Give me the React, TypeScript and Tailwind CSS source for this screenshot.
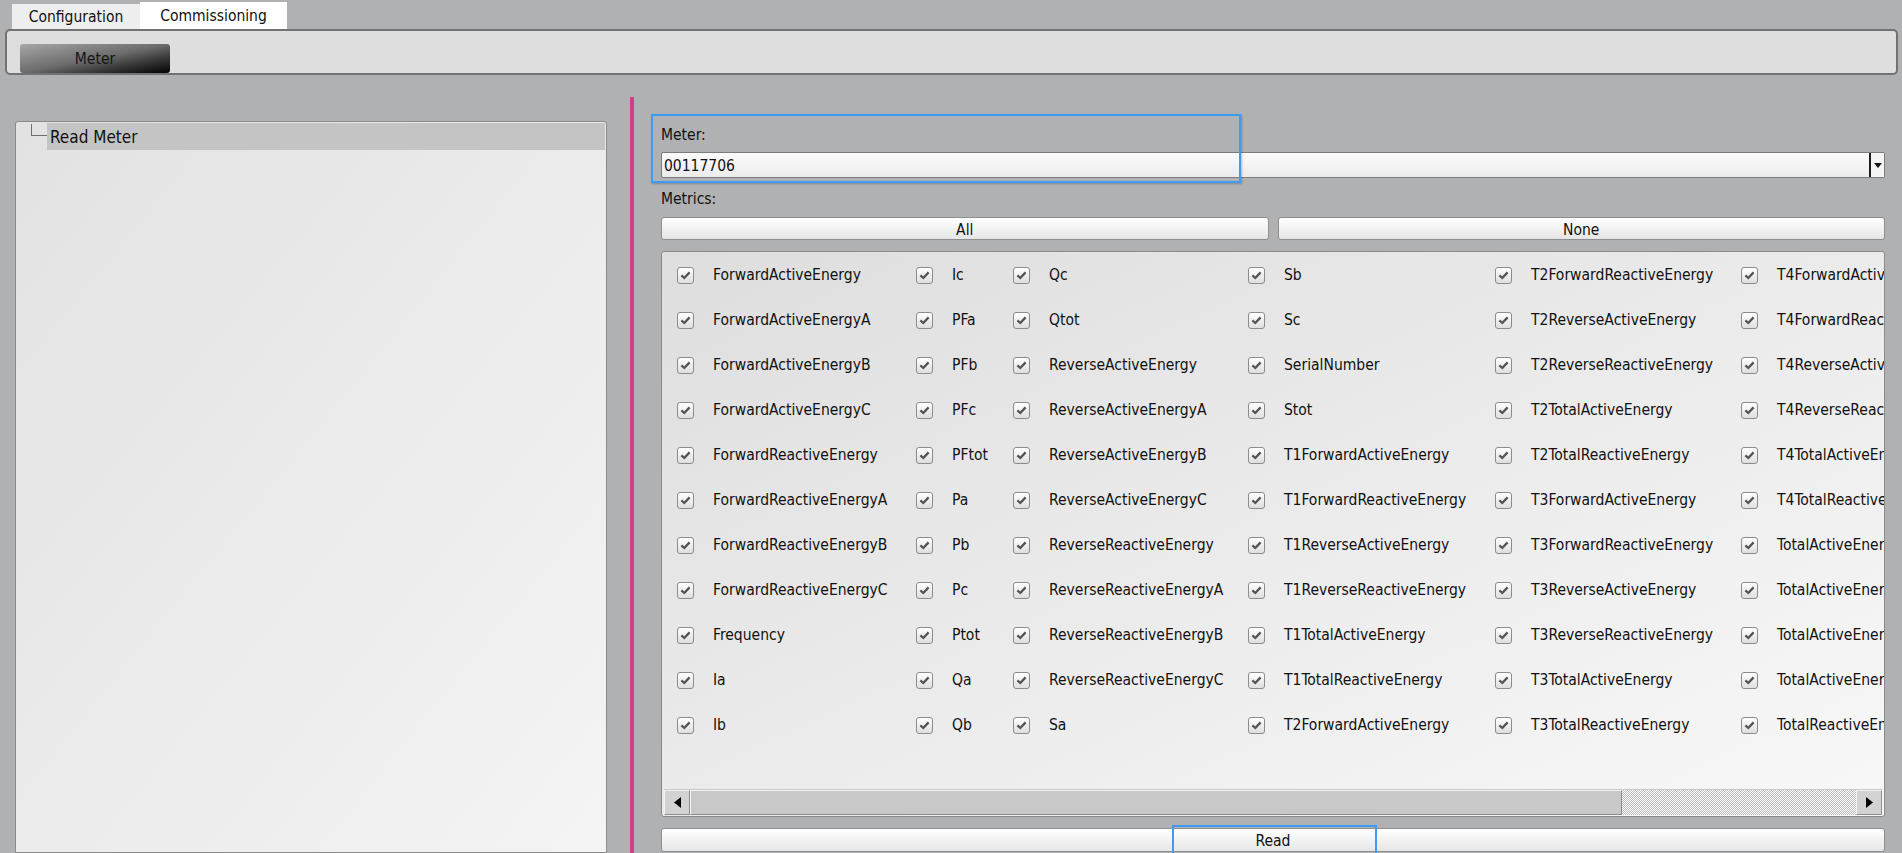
import React from "react";

const columns: string[][] = [
  [
    "ForwardActiveEnergy",
    "ForwardActiveEnergyA",
    "ForwardActiveEnergyB",
    "ForwardActiveEnergyC",
    "ForwardReactiveEnergy",
    "ForwardReactiveEnergyA",
    "ForwardReactiveEnergyB",
    "ForwardReactiveEnergyC",
    "Frequency",
    "Ia",
    "Ib",
  ],
  ["Ic", "PFa", "PFb", "PFc", "PFtot", "Pa", "Pb", "Pc", "Ptot", "Qa", "Qb"],
  [
    "Qc",
    "Qtot",
    "ReverseActiveEnergy",
    "ReverseActiveEnergyA",
    "ReverseActiveEnergyB",
    "ReverseActiveEnergyC",
    "ReverseReactiveEnergy",
    "ReverseReactiveEnergyA",
    "ReverseReactiveEnergyB",
    "ReverseReactiveEnergyC",
    "Sa",
  ],
  [
    "Sb",
    "Sc",
    "SerialNumber",
    "Stot",
    "T1ForwardActiveEnergy",
    "T1ForwardReactiveEnergy",
    "T1ReverseActiveEnergy",
    "T1ReverseReactiveEnergy",
    "T1TotalActiveEnergy",
    "T1TotalReactiveEnergy",
    "T2ForwardActiveEnergy",
  ],
  [
    "T2ForwardReactiveEnergy",
    "T2ReverseActiveEnergy",
    "T2ReverseReactiveEnergy",
    "T2TotalActiveEnergy",
    "T2TotalReactiveEnergy",
    "T3ForwardActiveEnergy",
    "T3ForwardReactiveEnergy",
    "T3ReverseActiveEnergy",
    "T3ReverseReactiveEnergy",
    "T3TotalActiveEnergy",
    "T3TotalReactiveEnergy",
  ],
  [
    "T4ForwardActiveEnergy",
    "T4ForwardReactiveEnergy",
    "T4ReverseActiveEnergy",
    "T4ReverseReactiveEnergy",
    "T4TotalActiveEnergy",
    "T4TotalReactiveEnergy",
    "TotalActiveEnergy",
    "TotalActiveEnergyA",
    "TotalActiveEnergyB",
    "TotalActiveEnergyC",
    "TotalReactiveEnergy",
  ],
];

const colWidths = ["w-[239px]", "w-[97px]", "w-[235px]", "w-[247px]", "w-[246px]", "w-[246px]"];

function CheckBox() {
  return (
    <span className="flex h-[17px] w-[17px] shrink-0 items-center justify-center rounded-[3px] border border-[#8c8c8c] bg-linear-to-b from-[#ffffff] to-[#dedede]">
      <svg width="11" height="9" viewBox="0 0 11 9">
        <path d="M1.4 4.4 L4.3 7 L9.6 1.4" fill="none" stroke="#545454" strokeWidth="2.3" />
      </svg>
    </span>
  );
}

export default function App() {
  return (
    <div className="relative h-screen w-full overflow-hidden bg-[#b0b1b3] font-['DejaVu_Sans_Condensed','DejaVu_Sans',sans-serif] text-[15.5px] text-[#111111]">
      {/* Tabs */}
      <div className="flex h-[29px] items-end pl-[12px]">
        <div className="flex h-[25px] w-[128px] items-center justify-center bg-[#eeeeee] pt-[3px]">Configuration</div>
        <div className="flex h-[27px] w-[147px] items-center justify-center bg-white pt-[3px]">Commissioning</div>
      </div>

      {/* Toolbar */}
      <div className="ml-[5px] mr-[4px] h-[46px] rounded-[5px] border-2 border-[#727272] bg-[#dedede] pl-[13px] pt-[13px]">
        <button className="flex h-[29px] w-[150px] items-center justify-center rounded-[3px] bg-linear-to-br from-[#a8a8a8] via-[#6c6c6c] to-[#050505] pt-[2px] text-[#161616]">
          Meter
        </button>
      </div>

      {/* Main area */}
      <div className="flex h-[778px]">
        {/* Tree panel */}
        <div className="ml-[15px] mt-[46px] w-[592px] rounded-t-[3px] border border-[#8a8a8a] bg-linear-to-br from-[#e2e2e2] to-[#f4f4f4] pt-[1px]">
          <div className="flex">
            <div className="ml-[15px] mt-[1px] h-[12px] w-[16px] border-b border-l border-[#6e6e6e]" />
            <div className="mr-[1px] flex h-[27px] flex-1 items-center bg-[#c4c4c4] pl-[3px] pt-[3px] text-[17px]">Read Meter</div>
          </div>
        </div>

        {/* Splitter */}
        <div className="ml-[23px] mt-[22px] w-[4px] bg-[#d13c8b]" />

        {/* Right content */}
        <div className="relative ml-[27px] mt-[22px] flex w-[1224px] flex-col">
          <div className="mt-[29px] h-[18px] leading-[18px]">Meter:</div>
          <div className="mt-[8px] flex h-[26px] items-stretch rounded-[2px] border border-[#7c7c7c] bg-linear-to-b from-[#fbfbfb] to-[#ececec]">
            <div className="flex flex-1 items-center pl-[2px] pt-[3px]">00117706</div>
            <div className="flex w-[15px] items-center justify-center border-l-2 border-[#1e1e1e] bg-[#f4f4f4]">
              <svg width="8" height="5" viewBox="0 0 8 5">
                <path d="M0 0 H8 L4 5 Z" fill="#111" />
              </svg>
            </div>
          </div>
          <div className="mt-[12px] h-[18px] leading-[18px]">Metrics:</div>
          <div className="mt-[9px] flex h-[23px] gap-[9px]">
            <button className="flex-1 rounded-[3px] border border-[#8e8e8e] bg-linear-to-b from-[#ffffff] to-[#e6e6e6] pt-[1px]">All</button>
            <button className="flex-1 rounded-[3px] border border-[#8e8e8e] bg-linear-to-b from-[#ffffff] to-[#e6e6e6] pt-[1px]">None</button>
          </div>

          {/* Metrics panel */}
          <div className="mt-[11px] flex h-[566px] flex-col rounded-[3px] border border-[#8a8a8a] bg-linear-to-br from-[#dedede] to-[#f8f8f8]">
            <div className="flex flex-1 overflow-hidden pl-[15px] pt-[1px]">
              {columns.map((col, ci) => (
                <div key={ci} className={"flex shrink-0 flex-col " + colWidths[ci]}>
                  {col.map((name) => (
                    <div key={name} className="flex h-[45px] items-center gap-[19px] whitespace-nowrap">
                      <CheckBox />
                      <span className="pt-[1px]">{name}</span>
                    </div>
                  ))}
                </div>
              ))}
            </div>

            {/* Horizontal scrollbar */}
            <div className="mx-[2px] mb-[1px] flex h-[26px] border-t border-[#c9c9c9]">
              <div className="flex w-[26px] items-center justify-center border border-[#f2f2f2] border-r-[#8e8e8e] border-b-[#8e8e8e] bg-[#d2d2d2]">
                <svg width="7" height="11" viewBox="0 0 7 11">
                  <path d="M7 0 V11 L0 5.5 Z" fill="#000" />
                </svg>
              </div>
              <div className="w-[932px] border border-[#f4f4f4] border-r-[#8a8a8a] border-b-[#8a8a8a] bg-[#c8c8c8]" />
              <div className="flex-1 bg-[repeating-conic-gradient(#bdbdbd_0%_25%,#ffffff_0%_50%)] bg-[length:2px_2px]" />
              <div className="flex w-[26px] items-center justify-center border border-[#f2f2f2] border-r-[#8e8e8e] border-b-[#8e8e8e] bg-[#d2d2d2]">
                <svg width="7" height="11" viewBox="0 0 7 11">
                  <path d="M0 0 V11 L7 5.5 Z" fill="#000" />
                </svg>
              </div>
            </div>
          </div>

          <button className="mt-[11px] h-[24px] rounded-[3px] border border-[#8e8e8e] bg-linear-to-b from-[#ffffff] to-[#e6e6e6] pt-[1px]">
            Read
          </button>

          {/* Focus highlights */}
          <div className="pointer-events-none absolute left-[-10px] top-[17px] h-[69px] w-[590px] border-2 border-[#3d9bf3] shadow-[1px_1px_2px_rgba(0,0,0,0.25)]" />
          <div className="pointer-events-none absolute left-[511px] top-[728px] h-[30px] w-[205px] border-2 border-[#3d9bf3]" />
        </div>
      </div>
    </div>
  );
}
